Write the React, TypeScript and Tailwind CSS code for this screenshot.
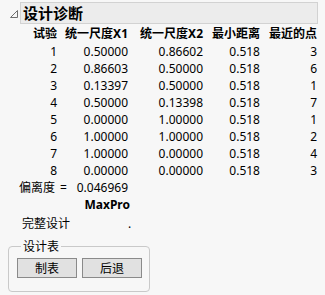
const rows = [
  ["1", "0.50000", "0.86602", "0.518", "3"],
  ["2", "0.86603", "0.50000", "0.518", "6"],
  ["3", "0.13397", "0.50000", "0.518", "1"],
  ["4", "0.50000", "0.13398", "0.518", "7"],
  ["5", "0.00000", "1.00000", "0.518", "1"],
  ["6", "1.00000", "1.00000", "0.518", "2"],
  ["7", "1.00000", "0.00000", "0.518", "4"],
  ["8", "0.00000", "0.00000", "0.518", "3"],
];

const headers = ["试验", "统一尺度X1", "统一尺度X2", "最小距离", "最近的点"];

export default function App() {
  return (
    <div className="h-[295px] w-[325px] overflow-hidden bg-[#f7f7f7] font-['Noto_Sans','Noto_Sans_CJK_SC',sans-serif] text-[12px] leading-[17px] text-black">
      {/* outline title */}
      <div className="flex items-center pt-[2px]">
        <div className="flex w-[20px] justify-end pr-[1px]">
          <svg width="10" height="10" viewBox="0 0 10 10" className="mt-[2px]">
            <path d="M8.5 1.5 L8.5 8.5 L1.5 8.5 Z" fill="none" stroke="#6f6f6f" strokeWidth="1" />
          </svg>
        </div>
        <div className="mr-[7px] flex h-[22px] flex-1 items-center border border-[#d2d2d2] bg-[#ececec] pl-[2px]">
          <span className="text-[15px] font-bold leading-[20px]">设计诊断</span>
        </div>
      </div>

      <div className="grid grid-cols-[57px_71px_75px_57px_57px] text-right">
        {headers.map((h) => (
          <div key={h} className="pt-[1px] pb-[1px] font-bold leading-[17px]">
            {h}
          </div>
        ))}
        {rows.map((r) =>
          r.map((c, i) => (
            <div key={r[0] + "-" + i} className="h-[17px]">
              {c}
            </div>
          ))
        )}
      </div>

      <div className="grid grid-cols-[70px_58px]">
        <div className="flex gap-[5px] pl-[19px]">
          <span>偏离度</span>
          <span>=</span>
        </div>
        <div className="text-right">0.046969</div>
      </div>
      <div className="w-[130px] text-right font-bold">MaxPro</div>
      <div className="mt-[2px] flex">
        <div className="w-[128px] pl-[22px]">完整设计</div>
        <div>.</div>
      </div>

      <fieldset className="ml-[8px] mt-[6px] w-[142px] rounded-[4px] border border-[#c9c9c9] pb-[13px] pl-[8px]">
        <legend className="ml-[4px] px-[2px] leading-[17px]">设计表</legend>
        <div className="mt-[3px] flex gap-[5px]">
          <button className="h-[20px] w-[60px] border border-[#8a8a8a] bg-[#e1e1e1] leading-[17px]">制表</button>
          <button className="h-[20px] w-[60px] border border-[#8a8a8a] bg-[#e1e1e1] leading-[17px]">后退</button>
        </div>
      </fieldset>
    </div>
  );
}
